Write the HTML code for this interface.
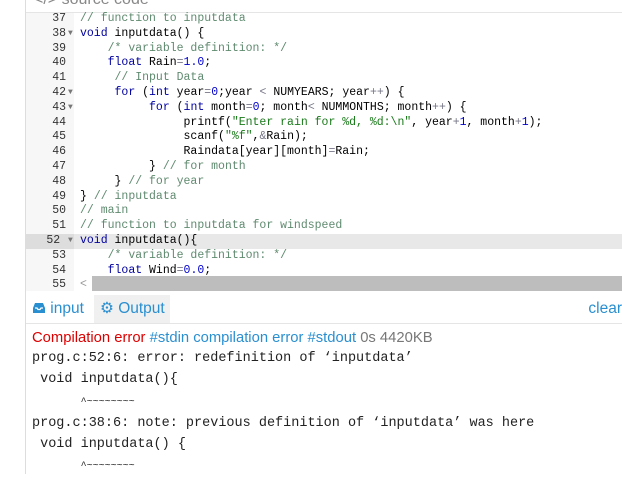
<!DOCTYPE html>
<html><head><style>
body{margin:0;width:622px;height:474px;overflow:hidden;background:#fff;font-family:"Liberation Sans",sans-serif;position:relative}
.lb{position:absolute;left:25px;top:0;width:1px;height:474px;background:#ddd}
.hdr{position:absolute;left:34px;top:-9px;font-size:16px;color:#888}
.hline{position:absolute;left:26px;top:12px;width:596px;height:1px;background:#e5e5e5}
.gut{position:absolute;left:26px;top:13px;width:48px;height:278px;background:#f7f7f7}
.code{position:absolute;left:26px;top:12px;width:596px;font-family:"Liberation Mono",monospace;font-size:11.5px;line-height:14.8px}
.r{position:relative;height:14.8px}
.n{position:absolute;left:0;width:40px;text-align:right;color:#333}
.f{position:absolute;left:42px;color:#777;font-size:8px}
.t{position:absolute;left:54px;color:#000;white-space:pre}
.hl{background:#e8e8e8}
.k{color:#0000a0}.c{color:#5f8a6f}.s{color:#1a7a1a}.m{color:#0000cd}.o{color:#778}
.sb{position:absolute;left:92px;top:276px;width:530px;height:15px;background:#bdbdbd}
.tabs{position:absolute;left:26px;top:293px;width:596px;height:30px;border-bottom:1px solid #e5e5e5}
.tab{position:absolute;top:2px;height:28px;line-height:28px;font-size:15.5px;color:#2a8fd0}
.out{position:absolute;left:32px;top:328px;font-size:14.8px;line-height:20px}
.pre{position:absolute;left:32px;top:348px;font-family:"Liberation Mono",monospace;font-size:13.5px;line-height:21.3px;white-space:pre;color:#222}
</style></head><body>
<div class="lb"></div>
<div class="hdr">&lt;/&gt; source code</div>
<div class="hline"></div>
<div class="gut"></div>
<div class="code"><div class="r"><span class="n">37</span><span class="t"><span class="c">// function to inputdata</span></span></div><div class="r"><span class="n">38</span><span class="f">▼</span><span class="t"><span class="k">void</span> inputdata() {</span></div><div class="r"><span class="n">39</span><span class="t">    <span class="c">/* variable definition: */</span></span></div><div class="r"><span class="n">40</span><span class="t">    <span class="k">float</span> Rain<span class="o">=</span><span class="m">1.0</span>;</span></div><div class="r"><span class="n">41</span><span class="t">     <span class="c">// Input Data</span></span></div><div class="r"><span class="n">42</span><span class="f">▼</span><span class="t">     <span class="k">for</span> (<span class="k">int</span> year<span class="o">=</span><span class="m">0</span>;year <span class="o">&lt;</span> NUMYEARS; year<span class="o">++</span>) {</span></div><div class="r"><span class="n">43</span><span class="f">▼</span><span class="t">          <span class="k">for</span> (<span class="k">int</span> month<span class="o">=</span><span class="m">0</span>; month<span class="o">&lt;</span> NUMMONTHS; month<span class="o">++</span>) {</span></div><div class="r"><span class="n">44</span><span class="t">               printf(<span class="s">"Enter rain for %d, %d:\n"</span>, year<span class="o">+</span><span class="m">1</span>, month<span class="o">+</span><span class="m">1</span>);</span></div><div class="r"><span class="n">45</span><span class="t">               scanf(<span class="s">"%f"</span>,<span class="o">&amp;</span>Rain);</span></div><div class="r"><span class="n">46</span><span class="t">               Raindata[year][month]<span class="o">=</span>Rain;</span></div><div class="r"><span class="n">47</span><span class="t">          } <span class="c">// for month</span></span></div><div class="r"><span class="n">48</span><span class="t">     } <span class="c">// for year</span></span></div><div class="r"><span class="n">49</span><span class="t">} <span class="c">// inputdata</span></span></div><div class="r"><span class="n">50</span><span class="t"><span class="c">// main</span></span></div><div class="r"><span class="n">51</span><span class="t"><span class="c">// function to inputdata for windspeed</span></span></div><div class="r hl"><span class="n" style="background:#ddd;width:48px">52&nbsp;&nbsp;</span><span class="f">▼</span><span class="t"><span class="k">void</span> inputdata(){</span></div><div class="r"><span class="n">53</span><span class="t">    <span class="c">/* variable definition: */</span></span></div><div class="r"><span class="n">54</span><span class="t">    <span class="k">float</span> Wind<span class="o">=</span><span class="m">0.0</span>;</span></div><div class="r"><span class="n">55</span><span class="t" style="color:#999">&lt;</span></div></div>
<div class="sb"></div>
<div class="tabs">
<div class="tab" style="left:6px"><svg width="14" height="12" viewBox="0 0 14 12" style="vertical-align:-1px"><path d="M1 6 L3 1 H11 L13 6 V11 H1 Z" fill="#2a8fd0"/><path d="M3 6 H5 L6 7.5 H8 L9 6 H11" stroke="#fff" stroke-width="1.3" fill="none"/></svg> input</div>
<div class="tab" style="left:68px;width:76px;background:#f0f0f0"><span style="margin-left:6px">⚙ Output</span></div>
<div class="tab" style="right:0">clear</div>
</div>
<div class="out"><span style="color:#d00">Compilation error</span> <span style="color:#2a8fd0">#stdin compilation error #stdout</span> <span style="color:#777">0s 4420KB</span></div>
<div class="pre">prog.c:52:6: error: redefinition of ‘inputdata’
 void inputdata(){
      <span style="font-size:10px">^~~~~~~~~</span>
prog.c:38:6: note: previous definition of ‘inputdata’ was here
 void inputdata() {
      <span style="font-size:10px">^~~~~~~~~</span></div>
</body></html>
